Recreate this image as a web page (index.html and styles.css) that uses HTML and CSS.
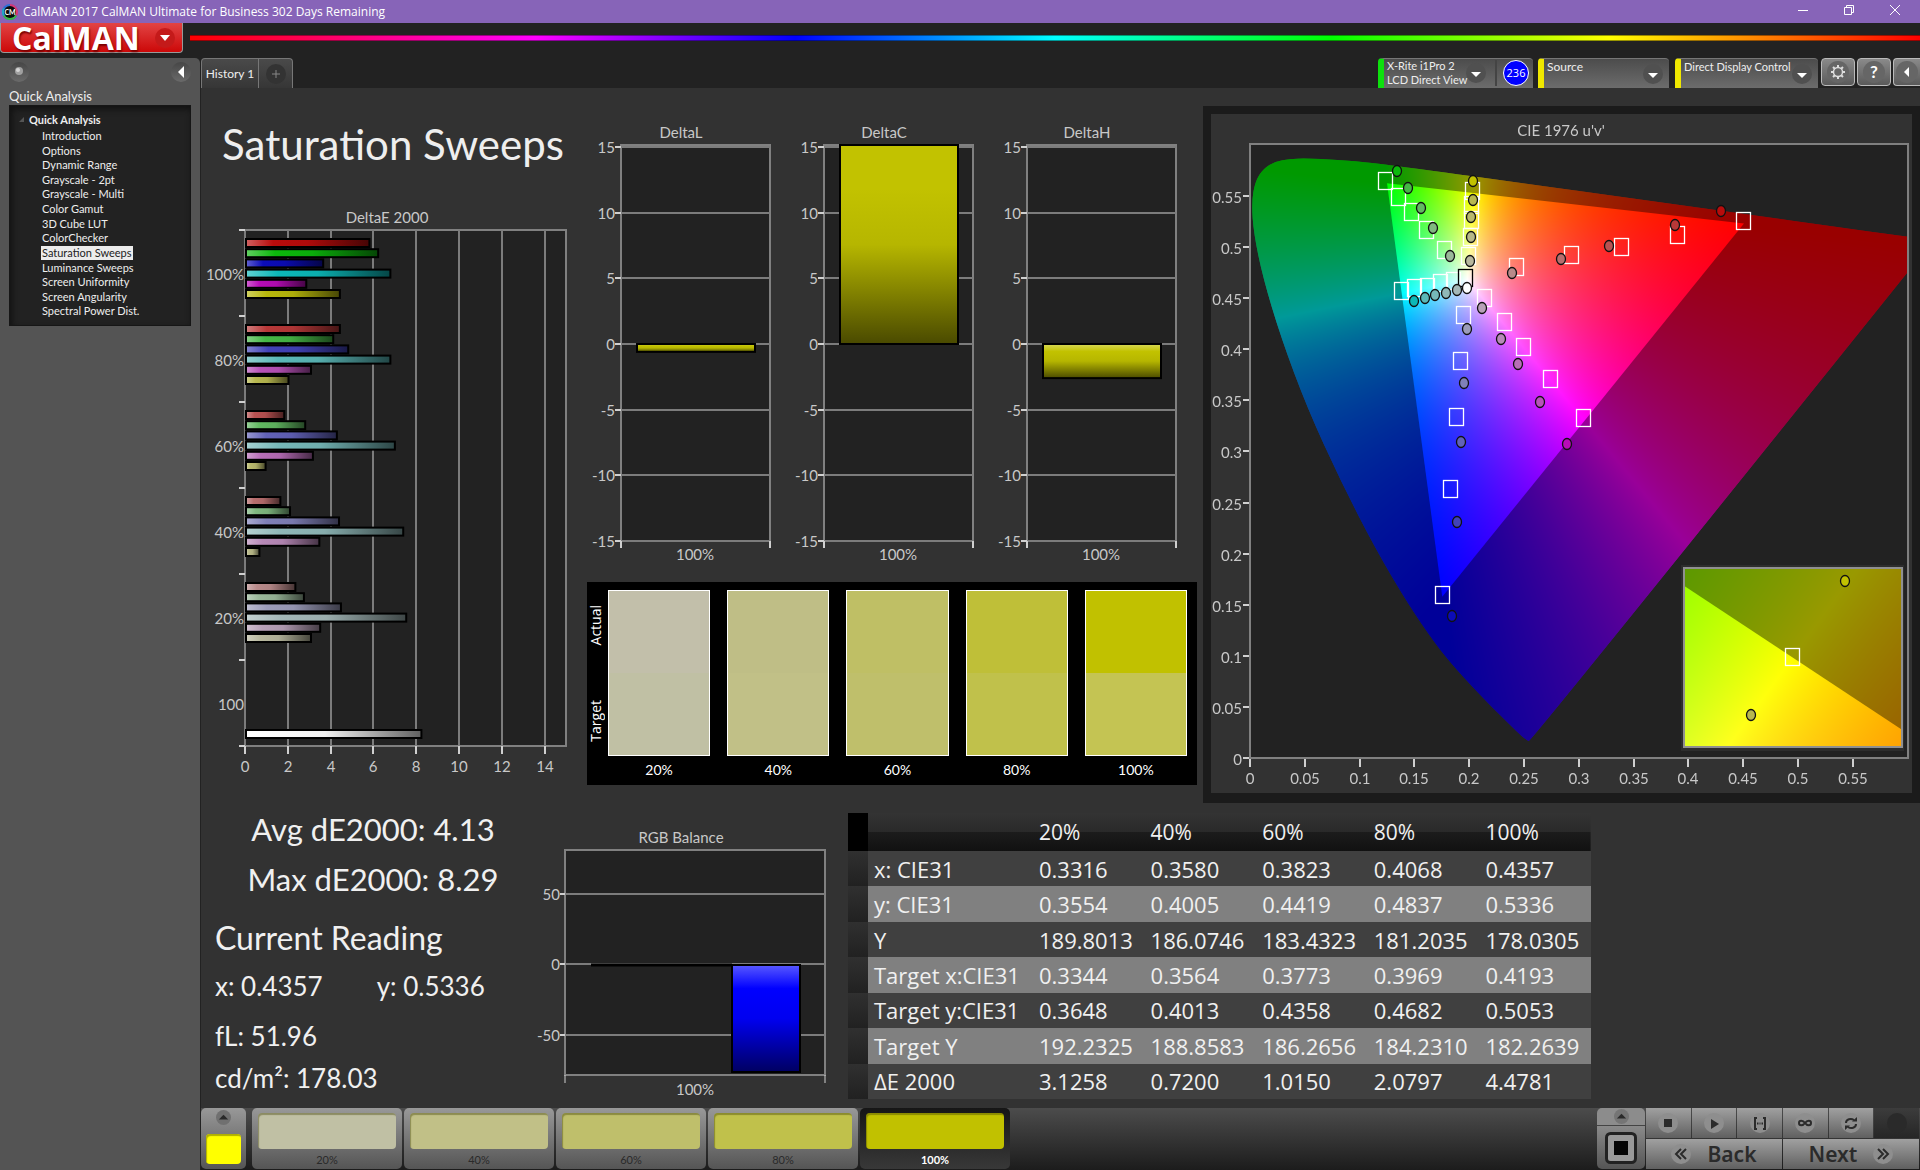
FILE: index.html
```html
<!DOCTYPE html>
<html lang="en">
<head>
    <meta charset="UTF-8">
    <meta name="viewport" content="width=device-width, initial-scale=1.0">
    <title>CalMAN 2017 CalMAN Ultimate for Business</title>
    <link rel="stylesheet" href="styles.css">
</head>
<body>

<div class="titlebar">
    <svg class="app-icon" viewBox="0 0 16 16">
        <circle cx="8" cy="8" r="8" fill="#2b6fd6"/>
        <path d="M8 8 L8 0 A8 8 0 0 1 15 12 Z" fill="#d63a7a"/>
        <path d="M8 8 L15 12 A8 8 0 0 1 1 12 Z" fill="#3ab54a"/>
        <path d="M8 8 L1 12 A8 8 0 0 1 1 4 Z" fill="#22a8c8"/>
        <circle cx="8" cy="8" r="6" fill="#0a0a0a"/>
        <text x="8" y="11" text-anchor="middle" class="app-icon-text">CM</text>
    </svg>
    <span class="titlebar-text">CalMAN 2017 CalMAN Ultimate for Business 302 Days Remaining</span>
    <div class="window-buttons">
        <button type="button" aria-label="Minimize"><svg viewBox="0 0 12 12"><path d="M1 6.5H11"/></svg></button>
        <button type="button" aria-label="Restore"><svg viewBox="0 0 12 12"><path d="M1.5 3.5H8.5V10.5H1.5Z M3.5 3V1.5H10.5V8.5H9"/></svg></button>
        <button type="button" aria-label="Close"><svg viewBox="0 0 12 12"><path d="M1 1L11 11M11 1L1 11"/></svg></button>
    </div>
</div>

<header class="brand-row">
    <button type="button" class="logo">
        <span class="logo-text">CalMAN</span>
        <span class="logo-arrow"><svg viewBox="0 0 10 6"><path d="M0 0H10L5 6Z"/></svg></span>
    </button>
    <div class="rainbow"></div>
</header>

<div class="shell">
    <aside class="sidebar">
        <div class="sidebar-top">
            <span class="knob"><svg viewBox="0 0 20 20"><circle cx="10" cy="9" r="4" fill="#a0a0a0"/><circle cx="9" cy="8" r="2" fill="#d5d5d5"/></svg></span>
            <button type="button" class="round-button" aria-label="Collapse"><svg viewBox="0 0 20 20"><path d="M13 4V16L7 10Z" fill="#fff"/></svg></button>
        </div>
        <h2 class="sidebar-title">Quick Analysis</h2>
        <nav class="tree">
            <div class="tree-root"><svg viewBox="0 0 6 6"><path d="M6 0V6H0Z" fill="#555"/></svg>Quick Analysis</div>
            <ul>
                <li><a href="#">Introduction</a></li>
                <li><a href="#">Options</a></li>
                <li><a href="#">Dynamic Range</a></li>
                <li><a href="#">Grayscale - 2pt</a></li>
                <li><a href="#">Grayscale - Multi</a></li>
                <li><a href="#">Color Gamut</a></li>
                <li><a href="#">3D Cube LUT</a></li>
                <li><a href="#">ColorChecker</a></li>
                <li><a href="#" class="selected">Saturation Sweeps</a></li>
                <li><a href="#">Luminance Sweeps</a></li>
                <li><a href="#">Screen Uniformity</a></li>
                <li><a href="#">Screen Angularity</a></li>
                <li><a href="#">Spectral Power Dist.</a></li>
            </ul>
        </nav>
    </aside>

    <main class="workspace">
        <div class="tabbar">
            <button type="button" class="tab">History 1</button>
            <button type="button" class="tab tab-add" aria-label="Add tab"><svg viewBox="0 0 20 20"><circle cx="10" cy="10" r="10" fill="#333"/><path d="M10 6V14M6 10H14" stroke="#888" fill="none"/></svg></button>

            <div class="devices">
                <button type="button" class="device meter">
                    <span class="device-name">X-Rite i1Pro 2<br>LCD Direct View</span>
                    <svg class="drop" viewBox="0 0 20 20"><circle cx="10" cy="10" r="10"/><path d="M5 9H15L10 14Z"/></svg>
                    <span class="meter-count"><b>236</b></span>
                </button>
                <div class="device source">
                    <select aria-label="Source"><option>Source</option></select>
                    <svg class="drop" viewBox="0 0 20 20"><circle cx="10" cy="10" r="10"/><path d="M5 9H15L10 14Z"/></svg>
                </div>
                <div class="device display">
                    <select aria-label="Display"><option>Direct Display Control</option></select>
                    <svg class="drop" viewBox="0 0 20 20"><circle cx="10" cy="10" r="10"/><path d="M5 9H15L10 14Z"/></svg>
                </div>
                <button type="button" class="tool" aria-label="Settings"><svg viewBox="0 0 22 22"><circle cx="11" cy="11" r="11" fill="#666"/><circle cx="11" cy="11" r="4.5" fill="none" stroke="#ddd" stroke-width="1.5"/><path d="M11 4V6.500M11 15.500V18M4 11H6.500M15.500 11H18M6 6L7.800 7.800M14.200 14.200L16 16M16 6L14.200 7.800M7.800 14.200L6 16" stroke="#ddd" stroke-width="2"/></svg></button>
                <button type="button" class="tool" aria-label="Help"><svg viewBox="0 0 22 22"><circle cx="11" cy="11" r="11" fill="#666"/><text x="11" y="17" text-anchor="middle" class="help-mark">?</text></svg></button>
                <button type="button" class="tool tool-last" aria-label="Collapse panel"><svg viewBox="0 0 22 22"><circle cx="11" cy="11" r="11" fill="#666"/><path d="M13 6V16L8 11Z" fill="#fff"/></svg></button>
            </div>
        </div>

        <div class="content">
            <div class="upper">
                <section class="col-left">
                    <h1>Saturation Sweeps</h1>
                    <svg id="deltaE" class="chart" viewBox="0 0 379 590"></svg>
                </section>

                <section class="col-middle">
                    <div class="deltas">
                        <svg id="deltaL" class="chart" viewBox="0 0 203 452"></svg>
                        <svg id="deltaC" class="chart" viewBox="0 0 203 452"></svg>
                        <svg id="deltaH" class="chart" viewBox="0 0 203 452"></svg>
                    </div>
                    <div class="swatches">
                        <div class="swatch-side"><span>Actual</span><span>Target</span></div>
                        <div class="swatch"><div class="pair"><i class="a20"></i><i class="t20"></i></div>20%</div>
                        <div class="swatch"><div class="pair"><i class="a40"></i><i class="t40"></i></div>40%</div>
                        <div class="swatch"><div class="pair"><i class="a60"></i><i class="t60"></i></div>60%</div>
                        <div class="swatch"><div class="pair"><i class="a80"></i><i class="t80"></i></div>80%</div>
                        <div class="swatch"><div class="pair"><i class="a100"></i><i class="t100"></i></div>100%</div>
                    </div>
                </section>

                <section class="cie">
                    <canvas id="cieCanvas" width="701" height="679"></canvas>
                    <svg id="cieChart" class="chart" viewBox="0 0 701 679"></svg>
                </section>
            </div>

            <div class="lower">
                <section class="readings">
                    <p class="stat">Avg dE2000: 4.13</p>
                    <p class="stat">Max dE2000: 8.29</p>
                    <h2>Current Reading</h2>
                    <p class="value xy"><span>x: 0.4357</span><span>y: 0.5336</span></p>
                    <p class="value">fL: 51.96</p>
                    <p class="value">cd/m²: 178.03</p>
                </section>

                <svg id="rgbBalance" class="chart" viewBox="0 0 313 290"></svg>

                <table class="results">
                    <thead>
                        <tr><th class="grip"></th><th class="name"></th><th>20%</th><th>40%</th><th>60%</th><th>80%</th><th>100%</th></tr>
                    </thead>
                    <tbody>
                        <tr><td class="grip"></td><td>x: CIE31</td><td>0.3316</td><td>0.3580</td><td>0.3823</td><td>0.4068</td><td>0.4357</td></tr>
                        <tr><td class="grip"></td><td>y: CIE31</td><td>0.3554</td><td>0.4005</td><td>0.4419</td><td>0.4837</td><td>0.5336</td></tr>
                        <tr><td class="grip"></td><td>Y</td><td>189.8013</td><td>186.0746</td><td>183.4323</td><td>181.2035</td><td>178.0305</td></tr>
                        <tr><td class="grip"></td><td>Target x:CIE31</td><td>0.3344</td><td>0.3564</td><td>0.3773</td><td>0.3969</td><td>0.4193</td></tr>
                        <tr><td class="grip"></td><td>Target y:CIE31</td><td>0.3648</td><td>0.4013</td><td>0.4358</td><td>0.4682</td><td>0.5053</td></tr>
                        <tr><td class="grip"></td><td>Target Y</td><td>192.2325</td><td>188.8583</td><td>186.2656</td><td>184.2310</td><td>182.2639</td></tr>
                        <tr><td class="grip"></td><td>ΔE 2000</td><td>3.1258</td><td>0.7200</td><td>1.0150</td><td>2.0797</td><td>4.4781</td></tr>
                    </tbody>
                </table>
            </div>
        </div>

        <footer class="bottombar">
            <button type="button" class="current" aria-label="Pattern">
                <svg viewBox="0 0 16 16"><circle cx="8" cy="8" r="8" fill="#707070"/><path d="M3 10H13L8 5Z" fill="#2a2a2a"/></svg>
                <i></i>
            </button>
            <div class="steps">
                <button type="button" class="step"><i class="t20"></i>20%</button>
                <button type="button" class="step"><i class="t40"></i>40%</button>
                <button type="button" class="step"><i class="t60"></i>60%</button>
                <button type="button" class="step"><i class="t80"></i>80%</button>
                <button type="button" class="step active"><i class="a100"></i>100%</button>
            </div>
            <div class="controls">
                <div class="pattern-window">
                    <button type="button" class="pw-up" aria-label="Expand"><svg viewBox="0 0 16 16"><circle cx="8" cy="8" r="8" fill="#757575"/><path d="M3 10H13L8 5Z" fill="#2a2a2a"/></svg></button>
                    <button type="button" class="pw-main" aria-label="Pattern window"><svg viewBox="0 0 32 32"><rect x="1.500" y="1.500" width="29" height="29" rx="4" fill="#999" stroke="#222" stroke-width="3"/><rect x="9" y="9" width="14" height="14" fill="#050505"/></svg></button>
                </div>
                <div class="transport">
                    <button type="button" aria-label="Stop"><svg viewBox="0 0 20 20"><circle cx="10" cy="10" r="10"/><path d="M6 6H14V14H6Z"/></svg></button>
                    <button type="button" aria-label="Play"><svg viewBox="0 0 20 20"><circle cx="10" cy="10" r="10"/><path d="M7 6L15 11L7 16Z"/></svg></button>
                    <button type="button" aria-label="Read series"><svg viewBox="0 0 20 20"><circle cx="10" cy="10" r="10"/><path class="line" d="M7 5H5V16H7M13 5H15V16H13"/><path d="M7 9.500H8.500V11.500H7ZM9.500 9.500H10.500V11.500H9.500ZM11.500 9.500H13V11.500H11.500Z"/></svg></button>
                    <button type="button" aria-label="Read continuous"><svg viewBox="0 0 20 20"><circle cx="10" cy="10" r="10"/><path class="line" d="M10 10C8 7 4 7 4 10S8 13 10 10S16 7 16 10S12 13 10 10Z"/></svg></button>
                    <button type="button" aria-label="Refresh"><svg viewBox="0 0 20 20"><circle cx="10" cy="10" r="10"/><path class="line" d="M5 10C5 6 10 5 13 7M15 11C15 15 10 16 7 14"/><path d="M11 8.500H16V4ZM9 12.500H4V17Z"/></svg></button>
                    <button type="button" class="off" aria-label="Idle"><svg viewBox="0 0 20 20"><circle cx="10" cy="10" r="10"/></svg></button>
                    <button type="button" class="wide"><svg viewBox="0 0 20 20"><circle cx="10" cy="10" r="10"/><path class="line" d="M10 5L5 10L10 15M15 5L10 10L15 15"/></svg>Back</button>
                    <button type="button" class="wide">Next<svg viewBox="0 0 20 20"><circle cx="10" cy="10" r="10"/><path class="line" d="M5 5L10 10L5 15M10 5L15 10L10 15"/></svg></button>
                </div>
            </div>
        </footer>
    </main>
</div>

<script src="charts.js"></script>
</body>
</html>
```

FILE: styles.css
```css
* {
    box-sizing: border-box;
}

body {
    margin: 0;
    min-height: 100vh;
    display: flex;
    flex-direction: column;
    background-color: #222;
    color: #eee;
    font-family: Lato, "Liberation Sans", sans-serif;
    overflow: hidden;
}

button, select {
    font-family: inherit;
    border: none;
    padding: 0;
    margin: 0;
    color: inherit;
    background: none;
}

h1, h2, p, ul {
    margin: 0;
    padding: 0;
    font-weight: normal;
}

svg {
    display: block;
}

/* Title bar */
.titlebar {
    height: 23px;
    background-color: #8764b8;
    display: flex;
    align-items: center;
    padding-left: 2px;
}

.app-icon {
    width: 16px;
    height: 16px;
}

.app-icon-text {
    font-size: 7px;
    font-weight: bold;
    fill: #fff;
}

.titlebar-text {
    margin-left: 5px;
    font: 12px "Open Sans", sans-serif;
    color: #fff;
}

.window-buttons {
    margin-left: auto;
    display: flex;
    padding-right: 2px;
}

.window-buttons button {
    width: 46px;
    height: 23px;
    display: flex;
    align-items: center;
    justify-content: center;
    padding-bottom: 3px;
}

.window-buttons svg {
    width: 12px;
    height: 12px;
    fill: none;
    stroke: #fff;
}

/* Brand */
.brand-row {
    height: 35px;
    display: flex;
    align-items: flex-start;
    gap: 7px;
}

.logo {
    width: 183px;
    height: 30px;
    display: flex;
    align-items: center;
    justify-content: space-between;
    padding: 0 7px 0 11px;
    background: linear-gradient(#e24444, #cc0808);
    border: 1px solid #999;
    border-top: none;
    border-radius: 0 0 4px 4px;
}

.logo-text {
    font: bold 32px/28px "Open Sans", sans-serif;
    color: #fff;
    text-shadow: 1px 2px 2px #7a0000;
}

.logo-arrow {
    width: 20px;
    height: 20px;
    border-radius: 50%;
    background-color: #c41a1a;
    display: flex;
    align-items: center;
    justify-content: center;
}

.logo-arrow svg {
    width: 10px;
    height: 6px;
    fill: #fff;
}

.rainbow {
    flex: 1;
    height: 6px;
    margin-top: 12px;
    background: linear-gradient(to right, #f00, #f0f 20%, #00f 35%, #0ff 50%, #0f0 66%, #ff0 82%, #f00);
    border-top: 1px solid rgba(0, 0, 0, 0.4);
    border-bottom: 1px solid rgba(0, 0, 0, 0.4);
}

/* Sidebar */
.shell {
    flex: 1;
    display: flex;
}

.sidebar {
    width: 200px;
    background-color: #545454;
    border-top-right-radius: 5px;
    padding: 4px 9px;
}

.sidebar-top {
    display: flex;
    justify-content: space-between;
}

.knob, .round-button {
    width: 20px;
    height: 20px;
    border-radius: 50%;
    background: linear-gradient(#464646, #6a6a6a);
}

.sidebar-title {
    font-size: 13px;
    line-height: 16px;
    margin: 6px 0 1px;
}

.tree {
    height: 221px;
    background-color: #222;
    border: 1px solid #161616;
    box-shadow: inset 2px 3px 6px #111;
    padding: 6px 9px;
    font-size: 11px;
}

.tree-root {
    display: flex;
    align-items: center;
    gap: 5px;
    height: 14px;
    margin-bottom: 3px;
    font-weight: bold;
}

.tree-root svg {
    width: 5px;
    height: 5px;
}

.tree ul {
    list-style: none;
    height: 190px;
    padding-left: 22px;
    display: grid;
    grid-auto-rows: 1fr;
}

.tree a {
    display: inline-block;
    line-height: 14px;
    padding: 0 1px;
    color: #eee;
    text-decoration: none;
}

.tree .selected {
    background-color: #ececec;
    color: #222;
}

/* Workspace */
.workspace {
    flex: 1;
    min-width: 0;
    display: flex;
    flex-direction: column;
    border-left: 1px solid #222;
}

.tabbar {
    height: 30px;
    display: flex;
}

.tab {
    width: 58px;
    background: linear-gradient(#4a4a4a, #363636);
    border: 1px solid #777;
    border-bottom: none;
    border-top-left-radius: 4px;
    font-size: 12px;
}

.tab-add {
    width: 34px;
    border-left: none;
    border-radius: 0 4px 0 0;
    display: flex;
    align-items: center;
    justify-content: center;
}

.tab-add svg {
    width: 20px;
    height: 20px;
}

.devices {
    margin-left: auto;
    display: flex;
    align-items: flex-start;
}

.device {
    height: 30px;
    display: flex;
    align-items: center;
    gap: 5px;
    background: linear-gradient(#4c4c4c, #6c6c6c);
    border-top: 1px solid #777;
    border-radius: 4px 4px 0 0;
    border-left: 6px solid #f0e800;
    margin-right: 6px;
    font-size: 12px;
    color: #eee;
}

.device select {
    flex: 1;
    height: 29px;
    appearance: none;
    font-size: 12px;
    padding: 0 0 15px 3px;
}

.device .drop {
    flex: none;
    width: 20px;
    height: 20px;
    margin-right: 6px;
}

.drop circle {
    fill: #505050;
}

.drop path {
    fill: #fff;
}

.meter {
    width: 155px;
    border-left-color: #0de00d;
    margin-right: 5px;
    padding-bottom: 1px;
}

.device-name {
    flex: 1;
    width: 72px;
    padding-left: 3px;
    font-size: 11px;
    line-height: 14px;
    text-align: left;
    white-space: nowrap;
}

.meter-count {
    border-left: 2px solid #444;
    padding: 0 4px 0 6px;
}

.meter .drop {
    margin-right: 4px;
}

.meter-count b {
    display: block;
    width: 26px;
    height: 26px;
    border: 1px solid #fff;
    border-radius: 50%;
    background-color: #00f;
    font: 11px/24px "Open Sans", sans-serif;
    text-align: center;
    color: #fff;
}

.source {
    width: 131px;
}

.display {
    width: 143px;
    margin-right: 3px;
}

.display select {
    font-size: 11px;
    width: 100px;
}

.display .drop {
    margin-left: -8px;
}

.tool {
    width: 34px;
    height: 28px;
    margin-right: 2px;
    border: 1px solid #bbb;
    border-radius: 4px;
    background: linear-gradient(#8a8a8a, #5a5a5a);
    display: flex;
    align-items: center;
    justify-content: center;
}

.tool svg {
    width: 22px;
    height: 22px;
}

.tool-last {
    width: 27px;
    margin-right: 0;
    border-right: none;
    border-radius: 4px 0 0 4px;
}

.help-mark {
    font-size: 17px;
    font-weight: bold;
    fill: #fff;
}

.content {
    flex: 1;
    background-color: #323232;
}

.upper {
    display: grid;
    grid-template-columns: 379fr 623fr 717fr;
    align-items: start;
}

.col-left h1 {
    height: 112px;
    padding-top: 26px;
    padding-left: 5px;
    text-align: center;
    font-size: 42px;
    line-height: 60px;
}

.chart {
    width: 100%;
    height: auto;
}

.chart text {
    font-size: 15px;
    fill: #c8c8c8;
}

.col-middle {
    padding-top: 30px;
}

.deltas {
    display: grid;
    grid-template-columns: repeat(3, 1fr);
    padding-right: 14px;
}

/* Actual / target swatches */
.swatches {
    margin: 12px 6px 0 7px;
    background-color: #000;
    display: grid;
    grid-template-columns: 4px repeat(5, 1fr);
    gap: 17px;
    padding: 8px 10px 7px 0;
    color: #fff;
}

.swatch-side {
    height: 166px;
    width: 18px;
    padding: 15px 0 14px;
    display: flex;
    flex-direction: column;
    justify-content: space-between;
    align-items: center;
    font: 14px/18px "Open Sans", sans-serif;
}

.swatch-side span {
    writing-mode: vertical-rl;
    transform: rotate(180deg);
}

.swatch {
    text-align: center;
    font-size: 14px;
    line-height: 28px;
    height: 188px;
}

.pair {
    height: 166px;
    border: 1px solid #fff;
    display: flex;
    flex-direction: column;
}

.pair i {
    flex: 1;
}

.a20 { background-color: #c2bfaa; }
.t20 { background-color: #c0c0a4; }
.a40 { background-color: #bfbe86; }
.t40 { background-color: #c1c087; }
.a60 { background-color: #bfbf65; }
.t60 { background-color: #bfbf6b; }
.a80 { background-color: #bfbf38; }
.t80 { background-color: #c0c14b; }
.a100 { background-color: #c1c100; }
.t100 { background-color: #c4c453; }

/* CIE panel, the svg sits over the canvas */
.cie {
    margin-top: 18px;
    background-color: #323232;
    border-style: solid;
    border-color: #1b1b1b;
    border-width: 8px 8px 10px;
    display: grid;
}

.cie canvas, .cie svg {
    grid-area: 1 / 1;
    width: 100%;
    height: auto;
}

.target {
    fill: none;
    stroke: #fff;
    stroke-width: 1.3;
}

.reference {
    stroke: #000;
}

/* Lower row */
.lower {
    display: grid;
    grid-template-columns: 334fr 313fr 743fr 329fr;
    align-items: start;
    padding-top: 1px;
}

.lower .chart, .results {
    margin-top: 9px;
}

.readings {
    padding-left: 14px;
    color: #f0f0f0;
}

.stat {
    font-size: 31px;
    line-height: 50px;
    padding-right: 4px;
    text-align: center;
}

.readings h2 {
    font-size: 32px;
    line-height: 50px;
    margin-top: 9px;
}

.value {
    font-size: 26px;
    line-height: 42px;
}

.xy {
    display: flex;
    gap: 54px;
    margin-top: 2px;
    margin-bottom: 8px;
}

.results {
    height: 286px;
    width: 100%;
    table-layout: fixed;
    border-collapse: collapse;
    font: 22px/30px "Open Sans", sans-serif;
    color: #f0f0f0;
}

.results th, .results td {
    padding: 0 0 0 6px;
    text-align: left;
    white-space: nowrap;
}

.results th {
    height: 38px;
    font-size: 21px;
    font-weight: 500;
}

.results thead tr {
    background: linear-gradient(#333 0, #2a2a2a 50%, #1c1c1c 50%, #111 100%);
}

.results tbody tr {
    background-color: #404040;
}

.results tbody tr:nth-child(even) {
    background-color: #808080;
}

.results .grip {
    width: 20px;
    padding: 0;
    background: linear-gradient(#303030, #212121);
}

.results th.grip {
    background: #000;
}

.results .name {
    width: 165px;
}

/* Bottom bar */
.bottombar {
    height: 62px;
    display: flex;
    background: linear-gradient(#4c4c4c, #1c1c1c);
}

.current, .step {
    background: linear-gradient(#989898, #555);
    border-radius: 5px;
    height: 61px;
}

.current {
    width: 45px;
    margin-right: 6px;
    display: flex;
    flex-direction: column;
    align-items: center;
    justify-content: space-between;
    padding: 2px 5px 5px;
}

.current svg {
    width: 15px;
    height: 15px;
}

.current i {
    width: 35px;
    height: 30px;
    border-radius: 4px;
    background-color: #ff0;
    box-shadow: inset 1px 2px 1px #b0b000;
}

.steps {
    display: flex;
    gap: 2px;
}

.step {
    width: 150px;
    padding: 5px 6px 0;
    font-size: 11px;
    line-height: 22px;
    color: #2a2a2a;
}

.step i {
    display: block;
    height: 36px;
    border-radius: 4px;
    box-shadow: inset 1px 2px 1px rgba(60, 60, 0, 0.4);
}

.active {
    background: linear-gradient(#161616, #383838);
    color: #fff;
    font-weight: bold;
}

.controls {
    margin-left: auto;
    display: flex;
    gap: 1px;
    padding-right: 1px;
}

.pattern-window {
    width: 48px;
    display: flex;
    flex-direction: column;
}

.pattern-window button {
    display: flex;
    align-items: center;
    justify-content: center;
}

.pw-up {
    height: 18px;
    background-color: #8c8c8c;
    border-bottom: 1px solid #444;
    border-radius: 5px 5px 0 0;
}

.pw-up svg {
    width: 15px;
    height: 15px;
}

.pw-main {
    height: 43px;
    background: linear-gradient(#8a8a8a, #555);
    border-radius: 0 0 5px 5px;
}

.pw-main svg {
    width: 32px;
    height: 32px;
}

.transport {
    width: 273px;
    height: 61px;
    display: grid;
    grid-template-columns: repeat(6, 1fr);
    grid-template-rows: 1fr 1fr;
    gap: 1px;
}

.transport button {
    display: flex;
    align-items: center;
    justify-content: center;
    gap: 16px;
    background: linear-gradient(#a0a0a0, #606060);
    font: 600 21px/28px "Noto Sans", sans-serif;
    color: #2b2b2b;
}

.transport svg {
    width: 20px;
    height: 20px;
    fill: #2b2b2b;
}

.transport circle {
    fill: #8e8e8e;
}

.transport .line {
    fill: none;
    stroke: #2b2b2b;
    stroke-width: 2;
}

.transport .wide {
    grid-column: span 3;
}

.transport .off {
    background: linear-gradient(#3c3c3c, #262626);
}

.transport .off circle {
    fill: #2a2a2a;
}
```

FILE: charts.js
```javascript
const NS = 'http://www.w3.org/2000/svg';

function add(parent, name, attrs, text) {
    const el = document.createElementNS(NS, name);
    for (const key in attrs) el.setAttribute(key, attrs[key]);
    if (text !== undefined) el.textContent = text;
    parent.appendChild(el);
    return el;
}

function line(svg, x1, y1, x2, y2, color, width) {
    add(svg, 'line', { x1, y1, x2, y2, stroke: color, 'stroke-width': width || 2 });
}

function label(svg, x, y, text, anchor) {
    add(svg, 'text', { x, y, 'text-anchor': anchor || 'middle' }, text);
}

function shade(hex, amount) {
    // amount < 0 darkens, > 0 lightens
    const n = parseInt(hex.slice(1), 16);
    const rgb = [n >> 16, (n >> 8) & 255, n & 255].map(c =>
        Math.round(amount < 0 ? c * (1 + amount) : c + (255 - c) * amount));
    return `rgb(${rgb.join(',')})`;
}

let gradientCount = 0;
function barFill(svg, color, vertical, flatTop) {
    const id = 'bar' + (gradientCount++);
    const g = add(svg, 'linearGradient', vertical ? { id, x1: 0, y1: 0, x2: 0, y2: 1 } : { id });
    add(g, 'stop', { offset: 0, 'stop-color': flatTop ? color : shade(color, 0.35) });
    add(g, 'stop', { offset: 0.22, 'stop-color': color });
    add(g, 'stop', { offset: 0.5, 'stop-color': shade(color, -0.06) });
    add(g, 'stop', { offset: 1, 'stop-color': shade(color, -0.62) });
    return `url(#${id})`;
}

function bar(svg, x, y, width, height, fill) {
    add(svg, 'rect', { x, y, width, height, fill, stroke: '#000', 'stroke-width': 2 });
}

// DeltaE 2000
function drawDeltaE() {
    const svg = document.getElementById('deltaE');
    const left = 44, right = 365, top = 30, bottom = 546, unit = 21.4, step = 86;
    const groups = [
        ['100%', [[5.86, '#b80c0c'], [6.27, '#0cb80c'], [3.7, '#0c0cb8'], [6.84, '#0cb8b8'], [2.91, '#b80cb8'], [4.48, '#b8b80c']]],
        ['80%', [[4.48, '#b83838'], [4.17, '#46b846'], [4.87, '#4242b8'], [6.84, '#5ab8b8'], [3.13, '#b852b8'], [2.08, '#b8b850']]],
        ['60%', [[1.88, '#b85252'], [2.86, '#62b862'], [4.34, '#6262b8'], [7.05, '#76b8b8'], [3.22, '#b86eb8'], [1.01, '#b8b86c']]],
        ['40%', [[1.7, '#b86e6e'], [2.15, '#80b880'], [4.44, '#8080b8'], [7.44, '#90b8b8'], [3.52, '#b88ab8'], [0.72, '#b8b888']]],
        ['20%', [[2.4, '#b88a8a'], [2.8, '#9ab89a'], [4.53, '#9c9cba'], [7.58, '#a4b8b8'], [3.56, '#b8a0b8'], [3.13, '#b8b89e']]]
    ];
    add(svg, 'rect', { x: left, y: top, width: right - left, height: bottom - top, fill: '#222', stroke: '#808080', 'stroke-width': 2 });
    label(svg, 186, 23, 'DeltaE 2000');
    for (let v = 0; v <= 14; v += 2) {
        const x = Math.round(left + v * unit);
        line(svg, x, top, x, bottom, '#7c7c7c');
        line(svg, x, bottom, x, bottom + 8, '#d0d0d0');
        label(svg, x, bottom + 26, v);
    }
    for (let i = 0; i <= 6; i++) line(svg, left - 6, top + i * step, left, top + i * step, '#d0d0d0');
    groups.forEach(([name, bars], i) => {
        label(svg, left - 1, top + i * step + 50, name, 'end');
        bars.forEach(([value, color], j) => {
            bar(svg, left + 1, top + i * step + 9 + j * 10.2, value * unit - 2, 8, barFill(svg, color));
        });
    });
    label(svg, left - 1, top + 5 * step + 50, '100', 'end');
    const g = add(svg, 'linearGradient', { id: 'white' });
    add(g, 'stop', { offset: 0, 'stop-color': '#fff' });
    add(g, 'stop', { offset: 0.45, 'stop-color': '#f2f2f2' });
    add(g, 'stop', { offset: 1, 'stop-color': '#606060' });
    bar(svg, left + 1, 530, 8.29 * unit - 2, 8, 'url(#white)');
}

// DeltaL, DeltaC and DeltaH share one layout
function drawDelta(id, title, from, to) {
    const svg = document.getElementById(id);
    const left = 41, right = 190, top = 27, bottom = 423, zero = 226, unit = 13.13;
    add(svg, 'rect', { x: left, y: top, width: right - left, height: bottom - top, fill: '#222', stroke: '#808080', 'stroke-width': 2 });
    label(svg, 101, 20, title);
    for (let v = 15; v >= -15; v -= 5) {
        const y = Math.round(zero - v * unit);
        line(svg, left, y, right, y, '#7c7c7c');
        line(svg, left - 6, y, left, y, '#d0d0d0');
        label(svg, left - 6, y + 6, v, 'end');
    }
    line(svg, left, bottom, left, bottom + 7, '#d0d0d0');
    line(svg, right, bottom, right, bottom + 7, '#d0d0d0');
    label(svg, 115, 442, '100%');
    const y = Math.max(top, zero - Math.max(from, to) * unit);
    const end = zero - Math.min(from, to) * unit;
    bar(svg, 57, y, 118, end - y, barFill(svg, '#c2c200', true, to > 15));
}

function drawBalance() {
    const svg = document.getElementById('rgbBalance');
    const left = 30, right = 290, top = 37, bottom = 262;
    add(svg, 'rect', { x: left, y: top, width: right - left, height: bottom - top, fill: '#222', stroke: '#808080', 'stroke-width': 2 });
    label(svg, 146, 30, 'RGB Balance');
    [[50, 81], [0, 151], [-50, 222]].forEach(([v, y]) => {
        line(svg, left, y, right, y, '#7c7c7c');
        line(svg, left - 5, y, left, y, '#d0d0d0');
        label(svg, left - 5, y + 6, v, 'end');
    });
    line(svg, left, bottom, left, bottom + 8, '#d0d0d0', 1);
    line(svg, right, bottom, right, bottom + 8, '#d0d0d0', 1);
    line(svg, 56, 152, 197, 152, '#000', 3);
    bar(svg, 197, 152, 68, 107, barFill(svg, '#0000ff', true));
    label(svg, 160, 282, '100%');
}

// CIE 1976 diagram
const U = 1096, V = 1022, X0 = 39, Y0 = 644;
const locus = [
    [.1741, .0050], [.1714, .0051], [.1644, .0109], [.1566, .0177], [.1440, .0297], [.1355, .0399], [.1241, .0578],
    [.1096, .0868], [.0913, .1327], [.0687, .2007], [.0454, .2950], [.0235, .4127], [.0082, .5384],
    [.0039, .6548], [.0139, .7502], [.0389, .8120], [.0743, .8338], [.1142, .8262], [.1547, .8059],
    [.2296, .7543], [.3016, .6923], [.3731, .6245], [.4441, .5547], [.5125, .4866], [.5752, .4242],
    [.6270, .3725], [.6658, .3340], [.6915, .3083], [.7190, .2809], [.7347, .2653]
];
const gamut = [[.64, .33], [.3, .6], [.15, .06]];

function uvPoint([x, y]) {
    const d = -2 * x + 12 * y + 3;
    return [X0 + 4 * x / d * U, Y0 - 9 * y / d * V];
}

function colorAt(x, y) {
    const z = 1 - x - y;
    const rgb = [
        3.2406 * x - 1.5372 * y - 0.4986 * z,
        -0.9689 * x + 1.8758 * y + 0.0415 * z,
        0.0557 * x - 0.2040 * y + 1.0570 * z
    ].map(c => Math.max(c, 0));
    const max = Math.max(...rgb) || 1;
    return rgb.map(c => c / max * 255);
}

function paint(width, height, toXY) {
    const c = document.createElement('canvas');
    c.width = width;
    c.height = height;
    const ctx = c.getContext('2d');
    const img = ctx.createImageData(width, height);
    for (let j = 0; j < height; j++) {
        for (let i = 0; i < width; i++) {
            const rgb = colorAt(...toXY(i, j));
            img.data.set([rgb[0], rgb[1], rgb[2], 255], (j * width + i) * 4);
        }
    }
    ctx.putImageData(img, 0, 0);
    return c;
}

function trace(ctx, points) {
    ctx.beginPath();
    points.forEach(([x, y]) => ctx.lineTo(x, y));
    ctx.closePath();
}

// dimmed outside the gamut triangle, full brightness inside
function fillGamut(ctx, image, x, y, outside, inside) {
    ctx.save();
    outside();
    ctx.clip();
    ctx.drawImage(image, x, y);
    ctx.fillStyle = 'rgba(0, 0, 0, 0.4)';
    ctx.fillRect(x, y, image.width, image.height);
    inside();
    ctx.clip();
    ctx.drawImage(image, x, y);
    ctx.restore();
}

function drawCieColors() {
    const ctx = document.getElementById('cieCanvas').getContext('2d');
    ctx.fillStyle = '#222';
    ctx.fillRect(39, 30, 658, 614);

    const full = paint(658, 614, (i, j) => {
        const u = i / U, v = (614 - j) / V, d = 6 * u - 16 * v + 12;
        return [9 * u / d, 4 * v / d];
    });
    ctx.save();
    ctx.beginPath();
    ctx.rect(39, 30, 658, 614);
    ctx.clip();
    fillGamut(ctx, full, 39, 30, () => {
        const p = locus.map(uvPoint);
        ctx.beginPath();
        ctx.moveTo(...p[p.length - 1]);
        for (let i = 0; i < p.length - 1; i++) {
            const next = p[i + 1];
            ctx.quadraticCurveTo(p[i][0], p[i][1], (p[i][0] + next[0]) / 2, (p[i][1] + next[1]) / 2);
        }
        ctx.closePath();
    }, () => trace(ctx, gamut.map(uvPoint)));
    ctx.restore();

    // zoomed inset around the selected target, in xy
    const sx = 3230, sy = 2690, cx = 581, cy = 543;
    ctx.fillStyle = '#2d2d2d';
    ctx.fillRect(470, 451, 223, 186);
    const zoom = paint(218, 179, (i, j) => [.4193 + (i + 473 - cx) / sx, .5053 - (j + 454 - cy) / sy]);
    fillGamut(ctx, zoom, 473, 454, () => {
        ctx.beginPath();
        ctx.rect(473, 454, 218, 179);
    }, () => trace(ctx, gamut.map(([x, y]) => [cx + (x - .4193) * sx, cy - (y - .5053) * sy])));
}

function drawCieChart() {
    const svg = document.getElementById('cieChart');
    const targets = [
        [174, 67], [187, 83], [200, 98], [215, 116], [233, 136],
        [261, 77], [260, 91], [260, 106], [259, 123], [257, 142],
        [532, 107], [466, 121], [410, 133], [360, 141], [305, 153],
        [190, 177], [203, 174], [216, 173], [229, 169], [242, 167],
        [273, 184], [293, 208], [312, 233], [339, 265], [372, 304],
        [252, 201], [249, 247], [245, 303], [239, 375], [231, 481],
        [581, 543]
    ];
    const readings = [
        [186, 57, '#0cb80c'], [197, 74, '#46b846'], [210, 94, '#62b862'], [222, 114, '#80b880'], [239, 142, '#9ab89a'],
        [262, 67, '#c2c200'], [262, 86, '#b8b850'], [260, 103, '#b8b86c'], [260, 123, '#b8b888'], [259, 147, '#b8b89e'],
        [510, 97, '#b80c0c'], [464, 111, '#b83838'], [398, 132, '#b85252'], [350, 145, '#b86e6e'], [301, 159, '#b88a8a'],
        [203, 187, '#0cb8b8'], [214, 184, '#5ab8b8'], [224, 181, '#76b8b8'], [235, 179, '#90b8b8'], [246, 176, '#a4b8b8'],
        [271, 194, '#b8a0b8'], [290, 225, '#b88ab8'], [307, 250, '#b86eb8'], [329, 288, '#b852b8'], [356, 330, '#b80cb8'],
        [256, 215, '#9c9cba'], [253, 269, '#8080b8'], [250, 328, '#6262b8'], [246, 408, '#4242b8'], [241, 502, '#0c0cb8'],
        [256, 174, '#ffffff'], [634, 467, '#c2c200'], [540, 601, '#b8b850']
    ];
    label(svg, 350, 22, "CIE 1976 u'v'");
    add(svg, 'rect', { x: 39, y: 30, width: 658, height: 614, fill: 'none', stroke: '#808080', 'stroke-width': 2 });
    add(svg, 'rect', { x: 473, y: 454, width: 218, height: 179, fill: 'none', stroke: '#909090', 'stroke-width': 2 });
    for (let i = 0; i <= 11; i++) {
        const text = String(+(i * 0.05).toFixed(2));
        const x = Math.round(39 + i * 54.8), y = Math.round(644 - i * 51.1);
        line(svg, x, 645, x, 653, '#d0d0d0');
        label(svg, x, 670, text);
        line(svg, 32, y, 38, y, '#d0d0d0');
        label(svg, 31, y + 7, text, 'end');
    }
    const square = (x, y, name) => add(svg, 'rect', { class: name, x: x - 6.5, y: y - 8.5, width: 14, height: 17 });
    targets.forEach(([x, y]) => square(x, y, 'target'));
    square(254, 164, 'target reference');
    readings.forEach(([cx, cy, fill]) => add(svg, 'ellipse', { cx, cy, rx: 4.5, ry: 5.5, fill, stroke: '#111', 'stroke-width': 1.3 }));
}

drawDeltaE();
drawDelta('deltaL', 'DeltaL', 0, -0.6);
drawDelta('deltaC', 'DeltaC', 0, 30);
drawDelta('deltaH', 'DeltaH', 0, -2.6);
drawBalance();
drawCieColors();
drawCieChart();
```
